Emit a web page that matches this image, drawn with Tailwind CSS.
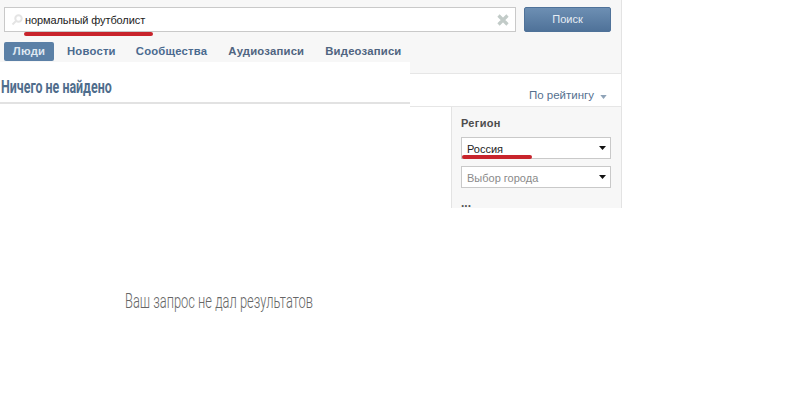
<!DOCTYPE html>
<html lang="ru">
<head>
  <meta charset="UTF-8">
  <title>Поиск</title>
  <script src="https://cdn.jsdelivr.net/npm/@tailwindcss/browser@4"></script>
</head>
<body class="bg-white font-['Liberation_Sans',sans-serif]">
  <div class="w-[796px] h-[417px] overflow-hidden">

    <!-- search + tabs -->
    <div class="w-[622px] h-[62px] bg-[#f7f7f7] border-r border-[#e3e3e3] pl-[4px] pt-[7px]">
      <div class="flex gap-[8px]">
        <div class="relative w-[512px] h-[25px] bg-white border border-[#c9c9c9] flex items-center pl-[6px]">
          <svg class="w-[12px] h-[12px]" viewBox="0 0 12 12" fill="none" stroke="#e4e4e4" stroke-width="2"><circle cx="7.5" cy="4.5" r="3.2"/><path d="M5 7 1.5 10.5"/></svg>
          <span class="ml-[2px] pt-[2px] text-[11px] tracking-[-0.1px] leading-none text-[#222]">нормальный футболист</span>
          <div class="absolute left-[19px] top-[24px] w-[129px] h-[4px] rounded-full bg-[#c8242c]"></div>
          <svg class="absolute right-[6px] top-[6px] w-[12px] h-[12px]" viewBox="0 0 12 12" stroke="#c2cbc8" stroke-width="3.2"><path d="M1.5 1.5 10.5 10.5M10.5 1.5 1.5 10.5"/></svg>
        </div>
        <div class="w-[87px] h-[25px] rounded-[2px] bg-gradient-to-b from-[#6d8fb3] to-[#4f7299] border border-[#4f7299] flex items-center justify-center text-[11px] text-[#e6edf4]">Поиск</div>
      </div>
      <div class="flex mt-[10px] text-[11.3px] font-bold text-[#4a6a8f] tracking-[0.2px]">
        <div class="w-[50px] h-[19px] rounded-[2px] bg-[#5b80a6] text-[#dfe8f1] flex items-center justify-center">Люди</div>
        <div class="h-[19px] flex items-center ml-[13px]">Новости</div>
        <div class="h-[19px] flex items-center ml-[20px]">Сообщества</div>
        <div class="h-[19px] flex items-center ml-[21px] text-[#4f6480]">Аудиозаписи</div>
        <div class="h-[19px] flex items-center ml-[21px] text-[#4f6480]">Видеозаписи</div>
      </div>
    </div>

    <div class="flex">
      <!-- left column -->
      <div class="w-[410px]">
        <div class="h-[42px] border-b-2 border-[#e2e2e2] pt-[14px] pl-[1px]">
          <div class="origin-left scale-x-[0.69] w-[160px] text-[18px] leading-[22px] font-bold text-[#4f6d8c] whitespace-nowrap font-['Roboto',sans-serif]">Ничего не найдено</div>
        </div>
        <div class="mt-[185px] ml-[125px] origin-left scale-x-[0.645] w-[290px] text-[20px] leading-[24px] text-[#666] whitespace-nowrap font-['Roboto',sans-serif] font-light">Ваш запрос не дал результатов</div>
      </div>

      <!-- right column -->
      <div class="w-[212px] h-[146px]">
        <div class="h-[11px] bg-[#f7f7f7] border-r border-[#e3e3e3]"></div>
        <div class="h-[34px] bg-white border-t border-b border-[#e6e6e6] border-r flex items-end justify-end pr-[14px] pb-[2px] text-[11.5px] text-[#55708f]">
          По рейтингу
          <svg class="w-[7px] h-[4px] ml-[6px] mb-[5px]" viewBox="0 0 8 5" fill="#8fa3b8"><path d="M0 0h8L4 5z"/></svg>
        </div>
        <div class="h-[101px] ml-[41px] bg-[#f7f7f7] border-l border-r border-[#e3e3e3] pl-[9px] pr-[10px] pt-[9px]">
          <div class="text-[11px] leading-[14px] font-bold text-[#4d4d4d] tracking-[0.3px]">Регион</div>
          <div class="relative mt-[7px] h-[22px] bg-white border border-[#c9c9c9] flex items-center justify-between pl-[5px] pr-[4px] text-[11px] text-[#222]">
            <span class="pt-[2px]">Россия</span>
            <svg class="w-[7px] h-[4px]" viewBox="0 0 9 5" fill="#111"><path d="M0 0h9L4.5 5z"/></svg>
            <div class="absolute left-[0px] top-[17px] w-[70px] h-[4px] rounded-full bg-[#c8242c]"></div>
          </div>
          <div class="mt-[7px] h-[22px] bg-white border border-[#c9c9c9] flex items-center justify-between pl-[5px] pr-[4px] text-[11px] text-[#8a8a8a]">
            <span class="pt-[2px]">Выбор города</span>
            <svg class="w-[7px] h-[4px]" viewBox="0 0 9 5" fill="#111"><path d="M0 0h9L4.5 5z"/></svg>
          </div>
          <div class="mt-[10px] text-[12px] leading-[10px] font-bold text-[#555]">...</div>
        </div>
      </div>
    </div>
  </div>
</body>
</html>
